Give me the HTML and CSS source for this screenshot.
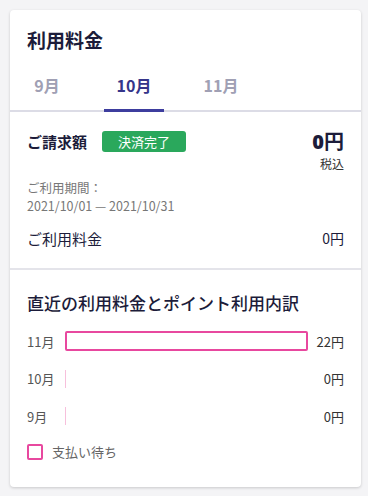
FILE: index.html
```html
<!DOCTYPE html>
<html>

<head>
    <meta charset="utf-8">
    <link rel="stylesheet" href="styles.css">
</head>

<body>
    <div class="card">
        <div class="card-header">
            <h1 class="card-title">利用料金</h1>
        </div>

        <div class="tabs">
            <div class="tab">9月</div>
            <div class="tab active">10月</div>
            <div class="tab">11月</div>
        </div>

        <div class="billing">
            <div class="billing-top">
                <div class="billing-label">
                    <span class="billing-title">ご請求額</span>
                    <span class="badge">決済完了</span>
                </div>
                <div class="billing-amount">
                    <div class="amount"><b>0</b>円</div>
                    <div class="tax">税込</div>
                </div>
            </div>

            <div class="period">
                <div>ご利用期間：</div>
                <div>2021/10/01 — 2021/10/31</div>
            </div>

            <div class="fee-row">
                <span>ご利用料金</span>
                <span class="fee-value">0円</span>
            </div>
        </div>

        <div class="history">
            <h2 class="history-title">直近の利用料金とポイント利用内訳</h2>

            <div class="chart">
                <div class="chart-row">
                    <span class="chart-label">11月</span>
                    <div class="chart-track">
                        <div class="bar" style="width: 100%"></div>
                    </div>
                    <span class="chart-value">22円</span>
                </div>
                <div class="chart-row">
                    <span class="chart-label">10月</span>
                    <div class="chart-track">
                        <div class="bar empty"></div>
                    </div>
                    <span class="chart-value">0円</span>
                </div>
                <div class="chart-row">
                    <span class="chart-label">9月</span>
                    <div class="chart-track">
                        <div class="bar empty"></div>
                    </div>
                    <span class="chart-value">0円</span>
                </div>
            </div>

            <div class="legend">
                <span class="legend-box"></span>
                <span>支払い待ち</span>
            </div>
        </div>
    </div>
</body>

</html>
```

FILE: styles.css
```css
body {
    margin: 0;
    padding: 10px;
    background-color: #f4f4f6;
    font-family: "Noto Sans CJK JP", "Noto Sans", sans-serif;
    color: #1c1c3a;
}

.card {
    width: 351px;
    background-color: #fff;
    border-radius: 4px;
    box-shadow: 0 1px 3px rgba(0, 0, 0, 0.18);
}

.card-header {
    padding: 17px 17px 0;
}

.card-title {
    margin: 0;
    font-size: 19px;
    line-height: 26px;
    font-weight: bold;
}

.tabs {
    display: flex;
    gap: 27px;
    margin-top: 14px;
    padding: 0 7px;
    border-bottom: 2px solid #dcdce6;
}

.tab {
    width: 60px;
    padding: 8px 0 14px;
    margin-bottom: -2px;
    text-align: center;
    font-size: 16px;
    line-height: 20px;
    font-weight: bold;
    color: #a0a0b4;
    border-bottom: 3px solid transparent;
}

.tab.active {
    color: #35358a;
    border-bottom-color: #3d3d9e;
}

.billing {
    padding: 18px 17px 19px;
    border-bottom: 2px solid #e4e4ea;
}

.billing-top {
    display: flex;
    justify-content: space-between;
    align-items: flex-start;
}

.billing-label {
    display: flex;
    align-items: center;
    gap: 15px;
    height: 22px;
}

.billing-title {
    font-size: 15px;
    font-weight: bold;
}

.badge {
    width: 84px;
    height: 21px;
    line-height: 21px;
    text-align: center;
    background-color: #2aa85c;
    color: #fff;
    font-size: 13px;
    border-radius: 3px;
}

.billing-amount {
    text-align: right;
}

.amount {
    font-size: 20px;
    line-height: 22px;
    font-weight: bold;
}

.amount b {
    font-family: "Noto Sans", sans-serif;
    font-weight: 900;
}

.tax {
    margin-top: 3px;
    font-size: 12px;
    line-height: 16px;
    color: #333;
}

.period {
    margin-top: 7px;
    font-size: 12.5px;
    line-height: 18px;
    color: #777;
}

.fee-row {
    display: flex;
    justify-content: space-between;
    align-items: center;
    margin-top: 12px;
    height: 22px;
    font-size: 15px;
}

.fee-value {
    font-size: 14px;
}

.history {
    padding: 21px 17px 26px;
}

.history-title {
    margin: 0;
    font-size: 17px;
    line-height: 24px;
    font-weight: 500;
}

.chart {
    display: flex;
    flex-direction: column;
    gap: 17.5px;
    margin-top: 16px;
}

.chart-row {
    display: flex;
    align-items: center;
    height: 20px;
}

.chart-label {
    width: 38px;
    font-size: 13px;
    color: #555;
}

.chart-track {
    flex: 1;
    height: 20px;
}

.bar {
    box-sizing: border-box;
    height: 20px;
    border: 2px solid #e8489f;
    border-radius: 2px;
}

.bar.empty {
    width: 0;
    height: 18px;
    margin-top: 1px;
    border: none;
    border-left: 1px solid #f7c0dc;
    border-radius: 0;
}

.chart-value {
    width: 36px;
    text-align: right;
    font-size: 13px;
    color: #333;
}

.legend {
    display: flex;
    align-items: center;
    gap: 9px;
    margin-top: 16px;
    font-size: 13px;
    color: #666;
}

.legend-box {
    box-sizing: border-box;
    width: 16px;
    height: 16px;
    border: 2px solid #e8489f;
    border-radius: 2px;
}
```
